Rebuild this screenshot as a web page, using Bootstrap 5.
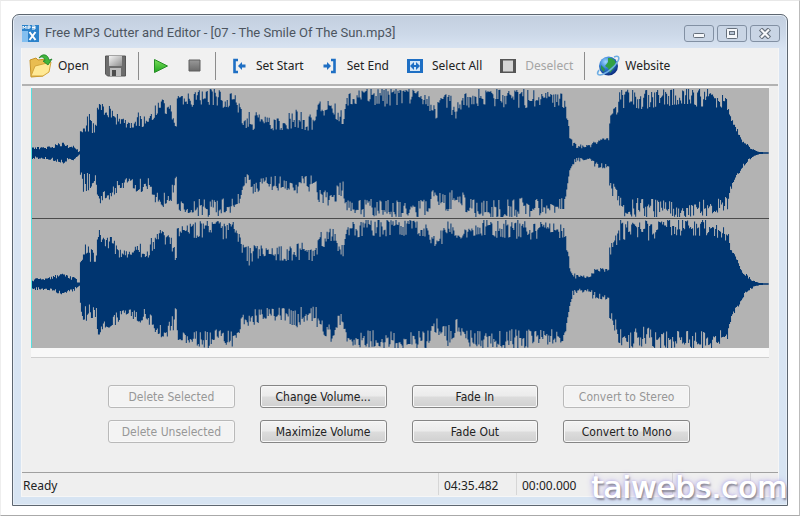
<!DOCTYPE html>
<html lang="en">
<head>
<meta charset="utf-8">
<meta name="viewport" content="width=device-width, initial-scale=1">
<title>Free MP3 Cutter and Editor</title>
<link href="https://cdn.jsdelivr.net/npm/bootstrap@5.3.0/dist/css/bootstrap.min.css" rel="stylesheet">
<style>
body{background:#fff;font-family:"Noto Sans","Open Sans",sans-serif;font-size:12px;line-height:16px;color:#222;border-right:1px solid #bbb;border-bottom:1px solid #aaa;border-left:1px solid #eee;border-top:1px solid #e8e8e8;min-height:100vh}
.app-window{margin:13px 11px 9px 11px;border:1px solid #5d6670;border-radius:7px 7px 0 0;background:linear-gradient(#c3cfdf 0,#cdd9e9 20px,#d9e4f2 34px,#d7e4f2 100%);box-shadow:inset 0 0 0 1px #e6eef7}
.title-bar{height:33px;padding:3px 7px 0 9px;color:#4c5560}
.title-text{font-family:Roboto,"Noto Sans",sans-serif;font-size:13px;padding-left:6px}
.win-controls{gap:3px}
.win-btn{width:30px;height:17px;border:1px solid #8290a3;border-radius:3px;background:#c9d5e5;padding:0}
.client{margin:0 8px 8px;background:#efefef;border:1px solid #f6f6f6;border-top:0}
.tool-bar{height:38px;background:#f1f1f1;border-bottom:2px solid #b2b2b2}
.tool-btn{border:0;background:none;padding:4px 7px;gap:5px;color:#222;text-decoration:none;white-space:nowrap}
.tool-btn.icon-only{padding:4px 5px}
.tool-btn:disabled{color:#a5a5a5}
.tool-icon{width:24px;height:24px;flex:none}
.tool-sep{width:1px;height:28px;margin:0 4px;background:#8c8c8c}
.wave-panel{margin:0 9px;padding-top:2px;padding-bottom:9px;background:#f8f8f8;border-bottom:1px solid #cfcfcf}
.wave-view{display:block;width:100%;height:260px;background:#b3b3b3;border-left:1px solid #57dfe0}
.actions{display:grid;grid-template-columns:repeat(4,1fr);gap:12px 25px;padding:27px 88px 29px 86px;font-family:"DejaVu Sans Condensed","DejaVu Sans",sans-serif}
.act-btn{height:23px;padding:0;font-size:12px;line-height:20px;border:1px solid #858585;border-radius:3px;color:#222;background:linear-gradient(#f3f3f3 0,#ebebeb 48%,#dcdcdc 52%,#d0d0d0 100%);box-shadow:inset 0 0 0 1px #f8f8f8;white-space:nowrap}
.act-btn:disabled{background:#f3f3f3;border-color:#b9b9b9;color:#979797}
.status-line{height:24px;border-top:1px solid #a0a0a0}
.status-cell{width:78px;padding-left:5px;border-left:1px solid #d6d6d6;height:22px;line-height:26px}
.status-cell.grip-cell{width:28px}
.status-main{padding-left:1px;line-height:26px}
.brand-mark{position:absolute;right:12px;bottom:10px;font:31px/36px "DejaVu Sans",sans-serif;color:#fff;text-shadow:1px 0 0 #fff,2px 2px 2px #85858f,0 0 3px #b4a9e8,0 0 6px #b4a9e8}
</style>
</head>
<body class="position-relative">
<div class="app-window">
  <header class="title-bar d-flex align-items-center">
    <svg width="17" height="17" viewBox="0 0 17 17" aria-hidden="true"><path fill="#2c82ca" d="M0 0h17v17H0z"/><path fill="#83bff0" d="M0 6h6v11H0z"/><path d="M1 4V1l1.500 2L4 1v3M6 4V1h2v2H6M10 1h3v3h-3M10 2.500h3" stroke="#fff" fill="none"/><path d="M7.500 7l6 8M13.500 7l-6 8" stroke="#fff" stroke-width="2"/></svg>
    <span class="title-text flex-grow-1 text-nowrap">Free MP3 Cutter and Editor - [07 - The Smile Of The Sun.mp3]</span>
    <div class="win-controls d-flex">
      <button class="win-btn d-flex align-items-center justify-content-center" aria-label="Minimize"><svg width="14" height="11"><rect x="1.500" y="5.500" width="11" height="4" rx="1" fill="#f5f7fa" stroke="#66707c"/></svg></button>
      <button class="win-btn d-flex align-items-center justify-content-center" aria-label="Maximize"><svg width="14" height="11"><rect x="1.500" y=".5" width="11" height="10" rx="1" fill="#f5f7fa" stroke="#66707c"/><rect x="4.500" y="3.500" width="5" height="3" fill="#b8c4d4" stroke="#66707c"/></svg></button>
      <button class="win-btn d-flex align-items-center justify-content-center" aria-label="Close"><svg width="14" height="11"><path d="M2.500 1l9 9M11.500 1l-9 9" stroke="#66707c" stroke-width="4.500"/><path d="M3 1.500l8 8M11 1.500l-8 8" stroke="#f8f9fb" stroke-width="2.200"/></svg></button>
    </div>
  </header>
  <main class="client">
    <nav class="tool-bar d-flex align-items-center" aria-label="Tools">
      <button class="tool-btn d-flex align-items-center"><svg class="tool-icon" viewBox="0 0 24 24"><path d="M1 6l6-2 2 2 8-1 1 5-4 12-12 1z" fill="#e9bd50" stroke="#c69428"/><path d="M2 22l4-10 16-4-2 10-6 4z" fill="#ffe995" stroke="#d3a53a"/><path d="M10 4c3-5 9-4 10 2l3-1-4 6-5-4 2-.5C15 3 13 2 10 4z" fill="#41b63b" stroke="#20802a" stroke-width=".8"/></svg>Open</button>
      <button class="tool-btn d-flex" aria-label="Save"><svg class="tool-icon" viewBox="0 0 24 24"><defs><linearGradient id="gs" x2="1" y2="1"><stop stop-color="#f4f4f4"/><stop offset="1" stop-color="#8f8f8f"/></linearGradient></defs><path d="M2.500 2h20v20h-18l-2-2z" fill="#6d6d6d" stroke="#565656"/><path d="M6 2h13v10H6z" fill="url(#gs)"/><path d="M7 14h11v8H7z" fill="#bdbdbd"/><path d="M9 16h4v6H9z" fill="#4c4c4c"/></svg></button>
      <span class="tool-sep"></span>
      <button class="tool-btn icon-only d-flex" aria-label="Play"><svg class="tool-icon" viewBox="0 0 24 24"><defs><linearGradient id="gp" x2="0" y2="1"><stop stop-color="#79df59"/><stop offset="1" stop-color="#1fa51f"/></linearGradient></defs><path d="M6.500 5.500v13L19.500 12z" fill="url(#gp)" stroke="#258d25" stroke-linejoin="round"/></svg></button>
      <button class="tool-btn icon-only d-flex" aria-label="Stop"><svg class="tool-icon" viewBox="0 0 24 24"><defs><linearGradient id="gt" x2="0" y2="1"><stop stop-color="#999"/><stop offset="1" stop-color="#6b6b6b"/></linearGradient></defs><path d="M7 6h11v11H7z" fill="url(#gt)" stroke="#5f5f5f"/></svg></button>
      <span class="tool-sep"></span>
      <button class="tool-btn d-flex align-items-center"><svg class="tool-icon" viewBox="0 0 24 24"><path d="M11 6H7.500v12H11" fill="none" stroke="#1e6fc4" stroke-width="2.600"/><path d="M11 12l4-4v2.500h3.500v3H15V16z" fill="#1e6fc4"/></svg>Set Start</button>
      <button class="tool-btn d-flex align-items-center"><svg class="tool-icon" viewBox="0 0 24 24"><path d="M13 6h3.500v12H13" fill="none" stroke="#1e6fc4" stroke-width="2.600"/><path d="M13 12L9 8v2.500H5.500v3H9V16z" fill="#1e6fc4"/></svg>Set End</button>
      <button class="tool-btn d-flex align-items-center"><svg class="tool-icon" viewBox="0 0 24 24"><path d="M4 5h16v14H4z" fill="#1e6fc4"/><path d="M7 7h10v10H7z" fill="#d5e7f7"/><path d="M7 12l4-4v3h2V8l4 4-4 4v-3h-2v3z" fill="#1e6fc4"/></svg>Select All</button>
      <button class="tool-btn d-flex align-items-center" disabled><svg class="tool-icon" viewBox="0 0 24 24"><path d="M4 5h16v14H4z" fill="#555"/><path d="M7 6.500h10v11H7z" fill="#d5d5d5"/></svg>Deselect</button>
      <span class="tool-sep"></span>
      <a href="#" class="tool-btn d-flex align-items-center"><svg class="tool-icon" viewBox="0 0 24 24"><defs><radialGradient id="gg" cx=".35" cy=".28" r=".75"><stop stop-color="#9fd8ff"/><stop offset=".5" stop-color="#2c77cf"/><stop offset="1" stop-color="#0a2b7c"/></radialGradient></defs><circle cx="12.500" cy="12" r="9.500" fill="url(#gg)"/><path d="M12 4c5 0 7 2 8 5l-2 5-4 5-2-5-3-2 3-4z" fill="#31a043"/><path d="M5 11l4 4-1 3-3-3z" fill="#2b9150"/><path d="M18 3c4-2 6 0 4 4-3 6-12 13-18 14-3 0-3-2-1-5" fill="none" stroke="#6eaee4" stroke-width="1.600"/></svg>Website</a>
    </nav>
    <section class="wave-panel" aria-label="Waveform">
      <svg class="wave-view" viewBox="0 0 738 260" preserveAspectRatio="none"><g id="wave" fill="#003570"></g><path d="M0 130.500h738" stroke="#4a4a4a"/></svg>
    </section>
    <section class="actions" aria-label="Editing">
      <button class="act-btn" disabled>Delete Selected</button>
      <button class="act-btn">Change Volume...</button>
      <button class="act-btn">Fade In</button>
      <button class="act-btn" disabled>Convert to Stereo</button>
      <button class="act-btn" disabled>Delete Unselected</button>
      <button class="act-btn">Maximize Volume</button>
      <button class="act-btn">Fade Out</button>
      <button class="act-btn">Convert to Mono</button>
    </section>
    <footer class="status-line d-flex">
      <span class="status-main flex-grow-1">Ready</span>
      <span class="status-cell">04:35.482</span>
      <span class="status-cell">00:00.000</span>
      <span class="status-cell"></span>
      <span class="status-cell"></span>
      <span class="status-cell grip-cell"></span>
    </footer>
  </main>
</div>
<div class="brand-mark">taiwebs.com</div>
<script src="https://cdn.jsdelivr.net/npm/bootstrap@5.3.0/dist/js/bootstrap.bundle.min.js"></script>
<script>
// Loudness envelope: position, body level, peak level
const env=[[0,3,6],[14,4,6],[20,5,8],[30,7,11],[36,5,8],[42,4,7],[46,1,3],[47,1,2],[48,19,22],[51,20,38],[56,22,40],[61,20,33],[64,24,33],[65,42,48],[67,45,54],[72,38,46],[79,36,49],[83,30,42],[87,27,36],[99,25,32],[106,28,42],[114,24,34],[117,28,44],[124,38,50],[129,42,55],[135,39,52],[141,32,46],[143,24,27],[144,24,27],[145,47,57],[154,48,59],[164,47,62],[179,48,65],[191,46,62],[201,47,62],[207,40,50],[211,28,41],[216,20,42],[224,25,40],[234,24,36],[254,24,38],[264,26,43],[274,23,40],[284,24,36],[286,36,53],[294,39,52],[299,42,57],[304,35,51],[311,28,40],[314,46,58],[319,49,62],[334,47,65],[369,49,65],[394,48,65],[399,42,56],[403,32,48],[409,40,55],[415,44,63],[421,38,58],[427,34,50],[434,46,62],[449,49,65],[494,46,64],[514,47,61],[533,46,59],[535,34,40],[538,15,22],[541,7,12],[545,5,9],[559,5,8],[561,8,15],[569,10,16],[577,12,15],[578,29,38],[582,31,45],[586,40,55],[589,46,64],[609,45,64],[617,44,63],[629,49,65],[659,48,65],[679,48,64],[696,44,56],[699,34,38],[705,22,26],[711,11,15],[717,5,8],[723,2,3],[728,1,1],[738,.6,.6]];
let seed=7193;
const rnd=()=>((seed=seed*16807%2147483647)/2147483647);
function level(x,drift){
  let i=1;
  while(i<env.length-1&&env[i][0]<x)i++;
  const a=env[i-1],b=env[i],t=(x-a[0])/(b[0]-a[0]);
  const lo=a[1]+(b[1]-a[1])*t,hi=a[2]+(b[2]-a[2])*t;
  // Slow drift keeps the rim uneven; single columns add peaks and notches
  const r=rnd();
  const k=r<.22?.8+rnd()*.25:r<.42?rnd()*.2-.1:drift+rnd()*.25-.12;
  return lo+(hi-lo)*k;
}
const wave=document.getElementById("wave");
function rim(mid,dir){
  let d="",drift=.5;
  for(let x=0;x<738;x++){
    if(x%3===0)drift=.25+rnd()*.6;
    d+=`V${(mid+dir*Math.min(64,level(x,drift))).toFixed(1)}h1`;
  }
  return `M0 ${mid}${d}V${mid}z`;
}
[65,196].forEach(mid=>{
  const p=document.createElementNS("http://www.w3.org/2000/svg","path");
  p.setAttribute("d",rim(mid,-1)+rim(mid,1));
  wave.appendChild(p);
});
</script>
</body>
</html>
